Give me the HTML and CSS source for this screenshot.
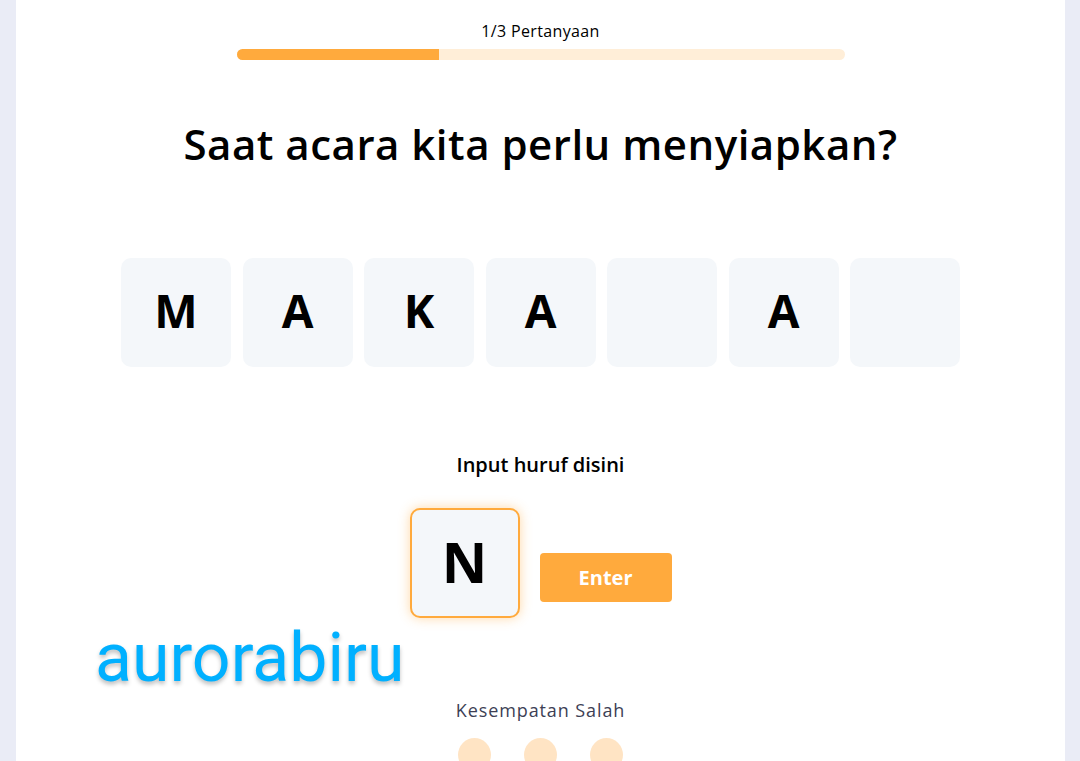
FILE: index.html
```html
<!DOCTYPE html>
<html lang="id">
<head>
  <meta charset="UTF-8" />
  <meta name="viewport" content="width=device-width, initial-scale=1.0">
  <title>Tebak Kata</title>
  <link rel="stylesheet" href="styles.css">
</head>
<body>

  <!-- Quiz Card -->
  <div class="card">
    <div class="progress">
      <div class="progress-label">1/3 Pertanyaan</div>
      <div class="progress-track">
        <div class="progress-fill" style="width:33.33%"></div>
      </div>
    </div>

    <h1 class="question">Saat acara kita perlu menyiapkan?</h1>

    <div class="tiles">
      <div class="tile">M</div>
      <div class="tile">A</div>
      <div class="tile">K</div>
      <div class="tile">A</div>
      <div class="tile"></div>
      <div class="tile">A</div>
      <div class="tile"></div>
    </div>

    <div class="input-label">Input huruf disini</div>
    <div class="input-row">
      <input class="letter-input" type="text" maxlength="1" value="N">
      <button class="enter-btn">Enter</button>
    </div>

    <div class="chances">
      <div class="chances-label">Kesempatan Salah</div>
      <div class="dots">
        <span class="dot"></span>
        <span class="dot"></span>
        <span class="dot"></span>
      </div>
    </div>

    <div class="watermark">aurorabiru</div>
  </div>

</body>
</html>
```

FILE: styles.css
```css
body { margin:0; background:#eaecf6; font-family:"Open Sans", "Noto Sans", sans-serif; color:#000; overflow:hidden; }
.card { position:relative; margin:0 15px 0 16px; background:#fff; min-height:761px; display:flex; flex-direction:column; align-items:center; }

.progress { width:608px; margin-top:19px; display:flex; flex-direction:column; align-items:center; }
.progress-label { font-size:16px; line-height:24px; letter-spacing:0.35px; }
.progress-track { width:100%; height:11px; margin-top:6px; background:#ffeed8; border-radius:6px; overflow:hidden; }
.progress-fill { height:100%; background:#ffaa3d; }

.question { margin:54px 0 0; font-size:42px; line-height:60px; font-weight:600; letter-spacing:0.5px; }

.tiles { display:flex; gap:11.5px; margin-top:84px; }
.tile { box-sizing:border-box; width:110px; height:109px; padding-bottom:6px; background:#f4f7fa; border-radius:10px; display:flex; align-items:center; justify-content:center; font-size:46px; font-weight:700; }

.input-label { margin-top:83px; font-size:20px; line-height:30px; font-weight:600; }
.input-row { display:flex; align-items:flex-start; gap:20px; margin-top:28px; }
.letter-input { box-sizing:border-box; width:110px; height:110px; border:2px solid #ffaa3d; border-radius:10px; background:#f4f7fa; text-align:center; font-family:inherit; font-size:56px; font-weight:700; color:#000; box-shadow:0 0 12px rgba(255,170,61,0.45); outline:none; padding:0 0 4px; }
.enter-btn { width:132px; height:49px; margin-top:45px; border:none; border-radius:4px; background:#ffaa3d; color:#fff; font-family:inherit; font-size:20px; font-weight:700; cursor:pointer; }

.chances { margin-top:79px; display:flex; flex-direction:column; align-items:center; }
.chances-label { font-size:18px; line-height:27px; color:#3d3f55; letter-spacing:0.9px; }
.dots { display:flex; gap:33px; margin-top:14px; }
.dot { width:33px; height:34px; border-radius:50%; background:#ffe4c4; }

.watermark { position:absolute; left:79px; top:618px; font-family:Roboto, sans-serif; font-size:68px; line-height:80px; color:#00b0ff; text-shadow:0 3px 4px rgba(0,0,0,0.25); }
```
